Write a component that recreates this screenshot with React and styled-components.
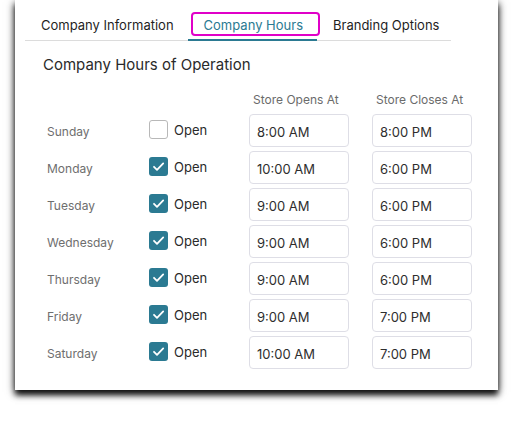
import React from "react";
import styled, { createGlobalStyle } from "styled-components";

const GlobalStyle = createGlobalStyle`
  html, body {
    margin: 0;
    padding: 0;
    background: #ffffff;
  }
  body {
    font-family: Inter, "Noto Sans", "Liberation Sans", sans-serif;
  }
`;

const hours = [
  { day: "Sunday", open: false, opens: "8:00 AM", closes: "8:00 PM" },
  { day: "Monday", open: true, opens: "10:00 AM", closes: "6:00 PM" },
  { day: "Tuesday", open: true, opens: "9:00 AM", closes: "6:00 PM" },
  { day: "Wednesday", open: true, opens: "9:00 AM", closes: "6:00 PM" },
  { day: "Thursday", open: true, opens: "9:00 AM", closes: "6:00 PM" },
  { day: "Friday", open: true, opens: "9:00 AM", closes: "7:00 PM" },
  { day: "Saturday", open: true, opens: "10:00 AM", closes: "7:00 PM" },
];

const tabs = ["Company Information", "Company Hours", "Branding Options"];

function Checkbox({ checked }) {
  return (
    <Box $checked={checked}>
      {checked && (
        <svg width="19" height="19" viewBox="0 0 19 19">
          <path
            d="M5 9.8l3 3L14.2 6.4"
            fill="none"
            stroke="#fff"
            strokeWidth="1.8"
            strokeLinecap="round"
            strokeLinejoin="round"
          />
        </svg>
      )}
    </Box>
  );
}

function App() {
  return (
    <>
      <GlobalStyle />
      <Page>
        <Card>
          <TabBar>
            {tabs.map((t) => (
              <Tab key={t} $active={t === "Company Hours"}>
                {t}
                {t === "Company Hours" && <Highlight />}
              </Tab>
            ))}
          </TabBar>
          <Content>
            <Heading>Company Hours of Operation</Heading>
            <Table>
              <span />
              <span />
              <ColHeader>Store Opens At</ColHeader>
              <ColHeader>Store Closes At</ColHeader>
              {hours.map((h) => (
                <React.Fragment key={h.day}>
                  <DayLabel>{h.day}</DayLabel>
                  <OpenToggle>
                    <Checkbox checked={h.open} />
                    <span>Open</span>
                  </OpenToggle>
                  <TimeInput>{h.opens}</TimeInput>
                  <TimeInput>{h.closes}</TimeInput>
                </React.Fragment>
              ))}
            </Table>
          </Content>
        </Card>
      </Page>
    </>
  );
}

export default App;

const Page = styled.div`
  width: 513px;
  height: 421px;
  padding: 0 15px;
  box-sizing: border-box;
`;

const Card = styled.div`
  background: #fff;
  height: 390px;
  box-shadow: 0 5px 6px rgba(0, 0, 0, 0.9), 0 2px 9px rgba(0, 0, 0, 0.55);
  padding: 10px 0 0 10px;
  box-sizing: border-box;
`;

const TabBar = styled.div`
  display: flex;
  width: 426px;
  border-bottom: 1px solid #dcdcdc;
`;

const Tab = styled.div`
  position: relative;
  flex: none;
  white-space: nowrap;
  height: 29px;
  padding: 0 14px 0 16px;
  display: flex;
  align-items: center;
  font-size: 13px;
  color: ${(p) => (p.$active ? "#2b7a92" : "#1f1f1f")};
  border-bottom: 2px solid ${(p) => (p.$active ? "#2b7a92" : "transparent")};
  margin-bottom: -1px;
`;

const Highlight = styled.div`
  position: absolute;
  left: 3px;
  right: -3px;
  top: 2px;
  height: 24px;
  border: 2.5px solid #e000c8;
  border-radius: 4px;
  box-sizing: border-box;
`;

const Content = styled.div`
  padding: 14px 0 0 18px;
`;

const Heading = styled.div`
  font-size: 15px;
  color: #2a2a2a;
  line-height: 20px;
`;

const Table = styled.div`
  display: grid;
  grid-template-columns: 102px 100px 100px 100px;
  row-gap: 4px;
  margin: 18px 0 0 4px;
  & > :nth-child(4n) {
    margin-left: 23px;
  }
`;

const ColHeader = styled.div`
  font-size: 12px;
  color: #6b6b6b;
  line-height: 14px;
  padding-left: 4px;
  white-space: nowrap;
  margin-bottom: 3px;
`;

const DayLabel = styled.div`
  font-size: 12px;
  color: #6e6e6e;
  display: flex;
  align-items: center;
  padding-top: 1px;
`;

const OpenToggle = styled.div`
  display: flex;
  align-items: center;
  gap: 6px;
  font-size: 13px;
  color: #2a2a2a;
  margin-top: -2px;
  margin-right: -53px;
`;

const Box = styled.div`
  width: 19px;
  height: 19px;
  box-sizing: border-box;
  border-radius: 3px;
  background: ${(p) => (p.$checked ? "#2b7a92" : "#fff")};
  border: ${(p) => (p.$checked ? "none" : "1px solid #b8b8b8")};
  display: flex;
`;

const TimeInput = styled.div`
  height: 33px;
  width: 100px;
  box-sizing: border-box;
  border: 1px solid #dedee6;
  border-radius: 4px;
  padding: 2px 0 0 7px;
  display: flex;
  align-items: center;
  font-size: 13px;
  color: #2e2e2e;
`;
